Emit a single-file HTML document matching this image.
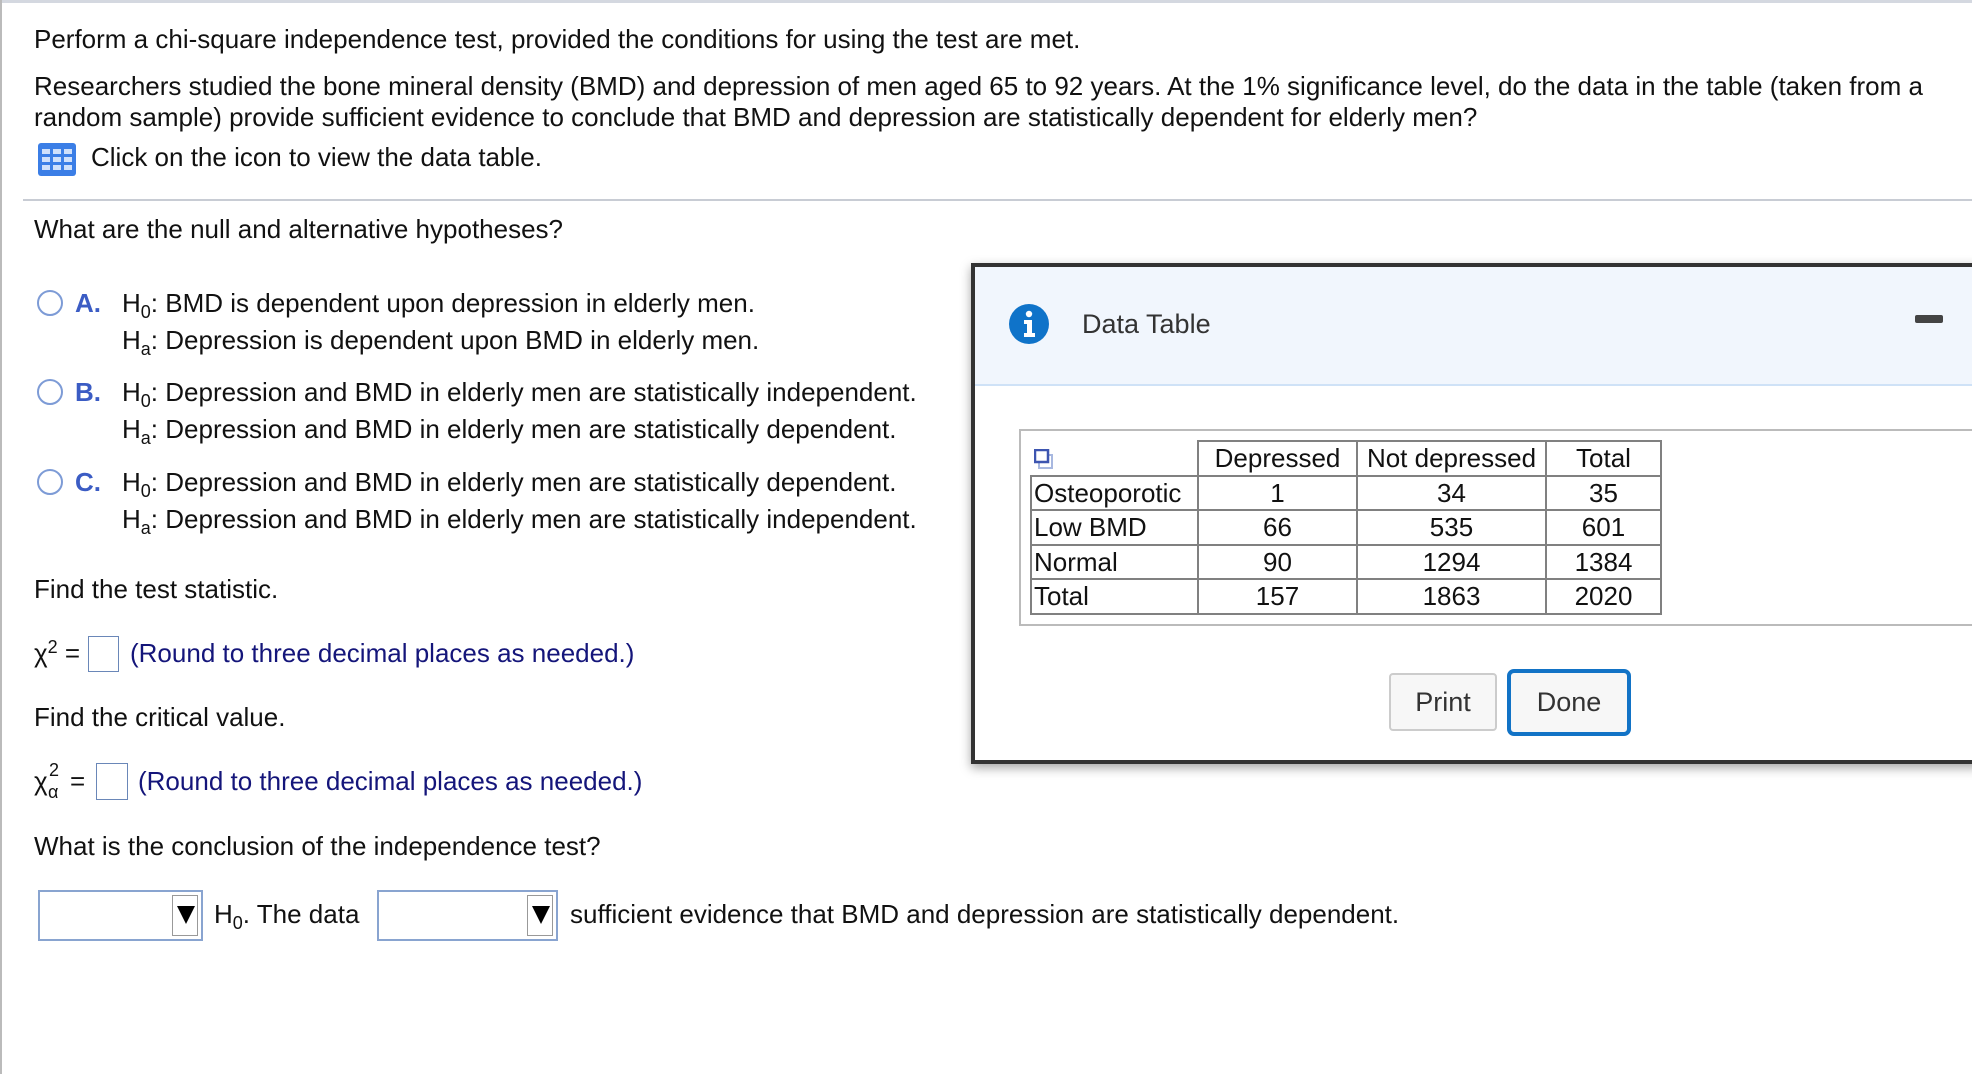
<!DOCTYPE html>
<html><head><meta charset="utf-8"><style>
*{margin:0;padding:0;box-sizing:border-box}
body{width:1972px;height:1074px;position:relative;background:#fff;font-family:"Liberation Sans",Arial,sans-serif;font-size:26px;color:#111;overflow:hidden}
.t{position:absolute;white-space:nowrap;line-height:30px}
.s{position:absolute;white-space:nowrap;line-height:22px;font-size:18px}
sub{font-size:18px;vertical-align:-6px;line-height:0}
sup{font-size:18px;vertical-align:9px;line-height:0}
.radio{position:absolute;width:26px;height:26px;border:2px solid #7d9bd6;border-radius:50%}
.lbl{color:#3b5cc4;font-weight:bold}
.nav{color:#14157a}
.box{position:absolute;border:1.5px solid #6a87b8;background:#fff}
.dd{position:absolute;border:2px solid #89a4d0;background:#fff}
.dd .ar{position:absolute;right:3px;top:3px;bottom:3px;width:26px;border:1px solid #999;background:#fff}
.dd .ar:after{content:"";position:absolute;left:4px;top:10px;border-left:9px solid transparent;border-right:9px solid transparent;border-top:18px solid #000}
table{border-collapse:collapse;font-size:26px;position:absolute;left:1030px;top:440px}
td{border:2.5px solid #808080;height:34.5px;padding:0 2px;line-height:28px;text-align:center}
td.l{text-align:left}
</style></head><body>
<div style="position:absolute;left:0;top:0;width:1972px;height:3px;background:#d4d8e0"></div>
<div style="position:absolute;left:0;top:0;width:2px;height:1074px;background:#bbb"></div>

<div class="t" style="left:34px;top:24px">Perform a chi-square independence test, provided the conditions for using the test are met.</div>
<div class="t" style="left:34px;top:71px">Researchers studied the bone mineral density (BMD) and depression of men aged 65 to 92 years. At the 1% significance level, do the data in the table (taken from a</div>
<div class="t" style="left:34px;top:102px">random sample) provide sufficient evidence to conclude that BMD and depression are statistically dependent for elderly men?</div>
<svg style="position:absolute;left:38px;top:143px" width="38" height="33" viewBox="0 0 38 33"><rect x="0" y="0" width="38" height="33" rx="3" fill="#3b7ee6"/><g fill="#cfe0fb"><rect x="4" y="6" width="8" height="5"/><rect x="15" y="6" width="8" height="5"/><rect x="26" y="6" width="8" height="5"/><rect x="4" y="14" width="8" height="5"/><rect x="15" y="14" width="8" height="5"/><rect x="26" y="14" width="8" height="5"/><rect x="4" y="22" width="8" height="5"/><rect x="15" y="22" width="8" height="5"/><rect x="26" y="22" width="8" height="5"/></g></svg>
<div class="t" style="left:91px;top:142px">Click on the icon to view the data table.</div>
<div style="position:absolute;left:23px;top:199px;width:1949px;height:2px;background:#c8ccd4"></div>
<div class="t" style="left:34px;top:214px">What are the null and alternative hypotheses?</div>

<div class="radio" style="left:37px;top:290px"></div>
<div class="t lbl" style="left:75px;top:288px">A.</div>
<div class="t" style="left:122px;top:288px">H<sub>0</sub>: BMD is dependent upon depression in elderly men.</div>
<div class="t" style="left:122px;top:325px">H<sub>a</sub>: Depression is dependent upon BMD in elderly men.</div>

<div class="radio" style="left:37px;top:379px"></div>
<div class="t lbl" style="left:75px;top:377px">B.</div>
<div class="t" style="left:122px;top:377px">H<sub>0</sub>: Depression and BMD in elderly men are statistically independent.</div>
<div class="t" style="left:122px;top:414px">H<sub>a</sub>: Depression and BMD in elderly men are statistically dependent.</div>

<div class="radio" style="left:37px;top:469px"></div>
<div class="t lbl" style="left:75px;top:467px">C.</div>
<div class="t" style="left:122px;top:467px">H<sub>0</sub>: Depression and BMD in elderly men are statistically dependent.</div>
<div class="t" style="left:122px;top:504px">H<sub>a</sub>: Depression and BMD in elderly men are statistically independent.</div>

<div class="t" style="left:34px;top:574px">Find the test statistic.</div>
<div class="t" style="left:34px;top:638px">χ<sup>2</sup> =</div>
<div class="box" style="left:88px;top:636px;width:31px;height:36px"></div>
<div class="t nav" style="left:130px;top:638px">(Round to three decimal places as needed.)</div>
<div class="t" style="left:34px;top:702px">Find the critical value.</div>
<div class="t" style="left:34px;top:766px">χ</div>
<div class="s" style="left:49px;top:759px">2</div>
<div class="s" style="left:48px;top:781px">α</div>
<div class="t" style="left:70px;top:766px">=</div>
<div class="box" style="left:96px;top:763px;width:32px;height:37px"></div>
<div class="t nav" style="left:138px;top:766px">(Round to three decimal places as needed.)</div>
<div class="t" style="left:34px;top:831px">What is the conclusion of the independence test?</div>

<div class="dd" style="left:38px;top:890px;width:165px;height:51px"><div class="ar"></div></div>
<div class="t" style="left:214px;top:899px">H<sub>0</sub>. The data</div>
<div class="dd" style="left:377px;top:890px;width:181px;height:51px"><div class="ar"></div></div>
<div class="t" style="left:570px;top:899px">sufficient evidence that BMD and depression are statistically dependent.</div>

<!-- dialog -->
<div style="position:absolute;left:971px;top:263px;width:1010px;height:501px;border:4px solid #333;background:#fff;box-shadow:0 4px 10px rgba(0,0,0,.35)">
 <div style="position:absolute;left:0;top:0;right:0;height:119px;background:#f1f6fd;border-bottom:2px solid #cfe2f7"></div>
</div>
<svg style="position:absolute;left:1009px;top:304px" width="40" height="40" viewBox="0 0 40 40"><circle cx="20" cy="20" r="20" fill="#0f73c9"/><circle cx="20" cy="10" r="3.2" fill="#fff"/><path d="M15 16h8v13h3v4H15v-4h3v-9h-3z" fill="#fff"/></svg>
<div class="t" style="left:1082px;top:309px;font-size:27px;color:#333">Data Table</div>
<div style="position:absolute;left:1915px;top:315px;width:28px;height:8px;background:#444;border-radius:2px"></div>
<div style="position:absolute;left:1019px;top:429px;width:960px;height:197px;border:2px solid #bbb"></div>
<svg style="position:absolute;left:1034px;top:449px" width="24" height="22" viewBox="0 0 24 22"><rect x="5" y="6" width="13" height="13" fill="#fff" stroke="#a8b8e0" stroke-width="2"/><rect x="1" y="1" width="13" height="12" fill="#fff" stroke="#3d55b0" stroke-width="2.5"/></svg>
<table>
<tr><td style="border:none;width:167px"></td><td style="width:159px">Depressed</td><td style="width:189px">Not depressed</td><td style="width:115px">Total</td></tr>
<tr><td class="l">Osteoporotic</td><td>1</td><td>34</td><td>35</td></tr>
<tr><td class="l">Low BMD</td><td>66</td><td>535</td><td>601</td></tr>
<tr><td class="l">Normal</td><td>90</td><td>1294</td><td>1384</td></tr>
<tr><td class="l">Total</td><td>157</td><td>1863</td><td>2020</td></tr>
</table>
<div style="position:absolute;left:1389px;top:673px;width:108px;height:58px;border:2px solid #ccc;border-radius:4px;background:#f7f7f7;font-size:27px;color:#333;text-align:center;line-height:54px">Print</div>
<div style="position:absolute;left:1507px;top:669px;width:124px;height:67px;border:4px solid #1273c6;border-radius:7px;background:#f7f7f7;font-size:27px;color:#333;text-align:center;line-height:59px">Done</div>
</body></html>
